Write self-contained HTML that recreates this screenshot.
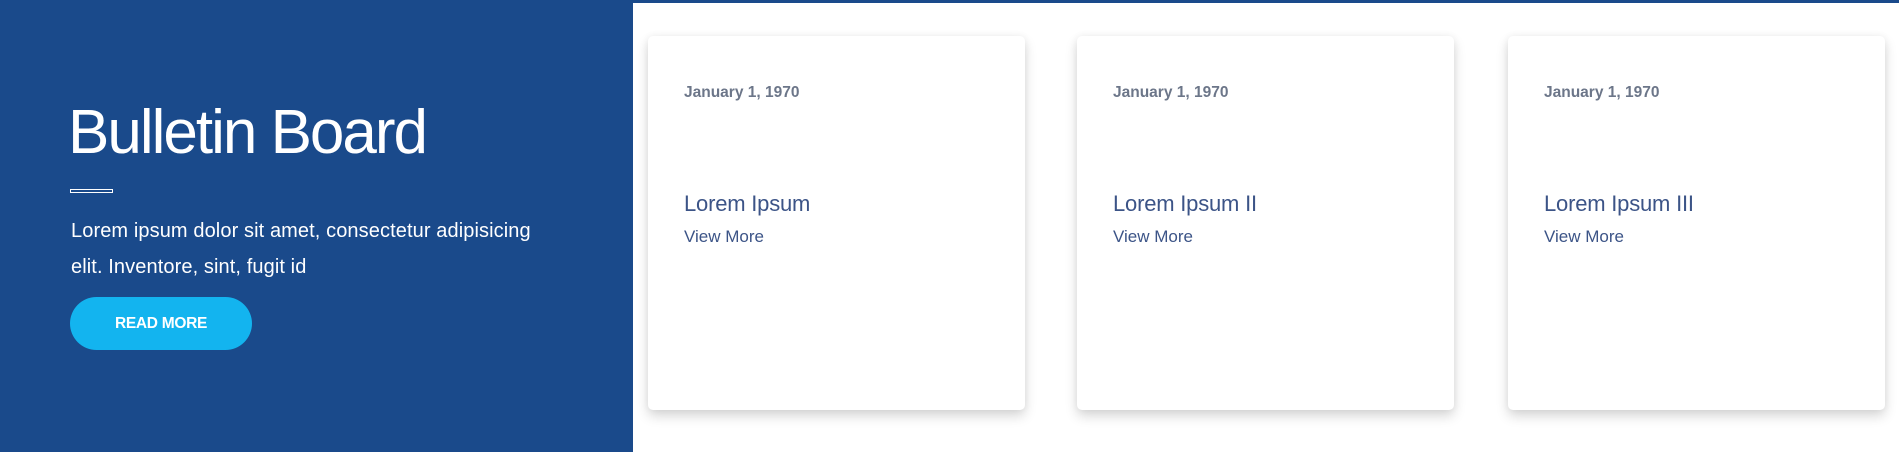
<!DOCTYPE html>
<html><head><meta charset="utf-8"><style>
*{margin:0;padding:0;box-sizing:border-box}
html,body{width:1899px;height:459px;background:#fff;overflow:hidden;font-family:"Liberation Sans",sans-serif;position:relative}
.topbar{position:absolute;left:0;top:0;width:1899px;height:3px;background:#1a4a8b}
.panel{position:absolute;left:0;top:0;width:633px;height:452px;background:#1a4a8b;color:#fff}
.title{position:absolute;left:68px;top:96px;font-size:62px;line-height:74px;font-weight:normal;letter-spacing:-2px;white-space:nowrap}
.rule{position:absolute;left:70px;top:189px;width:43px;height:4px;border:1px solid #fff}
.para{position:absolute;left:71px;top:213px;font-size:20px;line-height:36px;letter-spacing:0.1px;white-space:nowrap}
.btn{position:absolute;left:70px;top:297px;width:182px;height:53px;border-radius:27px;background:#13b4ef;color:#fff;font-weight:bold;font-size:15.5px;line-height:53px;text-align:center;letter-spacing:-0.3px}
.card{position:absolute;top:36px;width:377px;height:374px;background:#fff;border-radius:5px;box-shadow:0 6px 12px rgba(0,0,0,0.16),0 0 8px rgba(0,0,0,0.05)}
.date{position:absolute;left:36px;top:48px;font-size:15.5px;font-weight:bold;color:#6c7689;white-space:nowrap}
.ct{position:absolute;left:36px;top:155px;font-size:22px;color:#3c5487;white-space:nowrap;letter-spacing:-0.2px}
.vm{position:absolute;left:36px;top:191px;font-size:17px;color:#3c5487;white-space:nowrap}
</style></head><body>
<div class="topbar"></div>
<div class="panel">
<div class="title">Bulletin Board</div>
<div class="rule"></div>
<div class="para">Lorem ipsum dolor sit amet, consectetur adipisicing<br>elit. Inventore, sint, fugit id</div>
<div class="btn">READ MORE</div>
</div>
<div class="card" style="left:648px"><div class="date">January 1, 1970</div><div class="ct">Lorem Ipsum</div><div class="vm">View More</div></div>
<div class="card" style="left:1077px"><div class="date">January 1, 1970</div><div class="ct">Lorem Ipsum II</div><div class="vm">View More</div></div>
<div class="card" style="left:1508px"><div class="date">January 1, 1970</div><div class="ct">Lorem Ipsum III</div><div class="vm">View More</div></div>
</body></html>
